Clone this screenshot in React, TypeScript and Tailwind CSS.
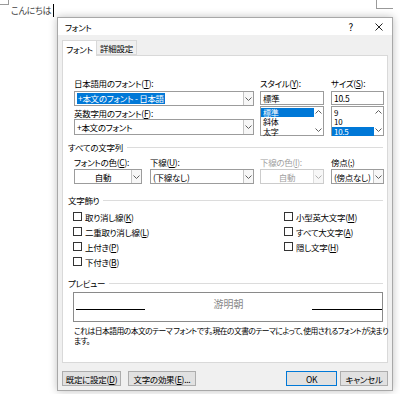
import React from 'react';

const jp = "font-['Noto_Sans_CJK_JP',sans-serif] [font-feature-settings:'palt']";

function Chevron({ up = false, color = '#606060' }: { up?: boolean; color?: string }) {
  return (
    <svg width="7" height="4" viewBox="0 0 7 4" className="block">
      <polyline
        points={up ? '0.5,3.5 3.5,0.5 6.5,3.5' : '0.5,0.5 3.5,3.5 6.5,0.5'}
        fill="none"
        stroke={color}
        strokeWidth="1"
      />
    </svg>
  );
}

// label with a mnemonic key underlined
function M({ a, k, b = '', className = '' }: { a: string; k: string; b?: string; className?: string }) {
  return (
    <span className={className}>
      {a}
      <span className="underline underline-offset-1">{k}</span>
      {b}
    </span>
  );
}

function Combo({ children, w, disabled = false, center = false, h = 'h-[15px]' }: { children: React.ReactNode; w: string; disabled?: boolean; center?: boolean; h?: string }) {
  return (
    <div className={`${w} ${h} flex bg-white border ${disabled ? 'border-[#cccccc] text-[#a0a0a0]' : 'border-[#9c9c9c]'}`}>
      <div className={`flex-1 flex items-center px-[2px] overflow-hidden ${center ? 'justify-center' : ''}`}>{children}</div>
      <div className={`w-[10px] flex items-center justify-center border-l ${disabled ? 'border-[#dddddd]' : 'border-[#c4c4c4]'} bg-[#f7f7f7]`}>
        <Chevron color={disabled ? '#b0b0b0' : '#606060'} />
      </div>
    </div>
  );
}

function ListBox({ items, sel, w }: { items: string[]; sel: number; w: string }) {
  return (
    <div className={`${w} h-[30px] mt-[1px] flex bg-white border border-[#9c9c9c]`}>
      <div className="flex-1 flex flex-col py-[0.5px] text-[8px]">
        {items.map((t, i) => (
          <div
            key={t}
            className={`h-[9.5px] leading-[9.5px] px-[2px] ${i === sel ? 'bg-[#0078d7] text-white' : ''}`}
          >
            {t}
          </div>
        ))}
      </div>
      <div className="w-[9px] flex flex-col items-center justify-between py-[3px]">
        <Chevron up />
        <Chevron />
      </div>
    </div>
  );
}

function Section({ title, className = '' }: { title: string; className?: string }) {
  return (
    <div className={`h-[12px] flex items-center gap-[4px] ${className}`}>
      <span>{title}</span>
      <div className="flex-1 h-px bg-[#dcdcdc]" />
    </div>
  );
}

function Check({ children }: { children: React.ReactNode }) {
  return (
    <div className="h-[15px] flex items-center gap-[3px]">
      <div className="w-[9px] h-[9px] border border-[#333333] bg-white" />
      <span>{children}</span>
    </div>
  );
}

function Button({ children, primary = false, w }: { children: React.ReactNode; primary?: boolean; w: string }) {
  return (
    <div
      className={`${w} h-[15px] flex items-center justify-center bg-[#e1e1e1] border ${primary ? 'border-[#0078d7]' : 'border-[#adadad]'}`}
    >
      {children}
    </div>
  );
}

export default function App() {
  return (
    <div className={`relative w-[400px] h-[394px] bg-white overflow-hidden text-[8.5px] leading-[12px] tracking-[-0.3px] whitespace-nowrap text-black ${jp}`}>
      {/* page corner marks */}
      <div className="absolute left-0 top-0 w-[9px] h-[5px] border-r border-b border-[#9a9a9a]" />
      <div className="absolute left-[376px] top-0 w-[17px] h-[9px] border-l border-b border-[#9a9a9a]" />

      {/* document text */}
      <div className="flex items-center pl-[11px] pt-[4px] h-[17px] text-[#444444] text-[9px]">
        <span>こんにちは</span>
        <div className="ml-[2px] w-px h-[13px] bg-black" />
      </div>

      {/* font dialog */}
      <div className="absolute left-[57px] top-[17px] w-[336px] h-[374px] flex flex-col bg-[#f0f0f0] border border-[#a8a8a8] shadow-[0_0_8px_rgba(0,0,0,0.25)]">
        <div className="h-[17px] bg-white flex items-center pl-[7px] pr-[9px]">
          <span>フォント</span>
          <span className="ml-auto mr-[22px] text-[10px]">?</span>
          <svg width="8" height="8" viewBox="0 0 8 8">
            <path d="M0.5 0.5 L7.5 7.5 M7.5 0.5 L0.5 7.5" stroke="#222" strokeWidth="1" />
          </svg>
        </div>

        <div className="flex-1 flex flex-col pl-[4px] pr-[4px]">
          {/* tabs */}
          <div className="mt-[5px] flex h-[15px]">
            <div className="w-[35px] bg-white border border-b-0 border-[#d9d9d9] flex items-center justify-center relative z-10 h-[16px]">
              フォント
            </div>
            <div className="w-[40px] bg-[#f0f0f0] border border-l-0 border-[#d9d9d9] flex items-center justify-center">
              詳細設定
            </div>
          </div>

          {/* tab panel */}
          <div className="h-[308px] bg-white border border-[#d9d9d9] pl-[5px] pr-[4px] flex flex-col">
            <div className="ml-[6px] pt-[21px] flex">
              <div className="w-[180px] flex flex-col">
                <div className="h-[12px] flex items-center"><M a="日本語用のフォント(" k="T" b="):" /></div>
                <div className="mt-[2px]">
                  <Combo w="w-[180px]">
                    <span className="bg-[#0078d7] text-white px-[1px] leading-[11px]">+本文のフォント - 日本語</span>
                  </Combo>
                </div>
                <div className="h-[12px] mt-[1px] flex items-center"><M a="英数字用のフォント(" k="F" b="):" /></div>
                <Combo w="w-[180px]" h="h-[16px]">
                  <span>+本文のフォント</span>
                </Combo>
              </div>

              <div className="w-[64px] ml-[6px] flex flex-col">
                <div className="h-[12px] flex items-center"><M a="スタイル(" k="Y" b="):" /></div>
                <div className="mt-[2px] h-[14px] border border-[#9c9c9c] bg-white flex items-center px-[2px]">標準</div>
                <ListBox w="w-[64px]" items={['標準', '斜体', '太字']} sel={0} />
              </div>

              <div className="w-[53px] ml-[7px] flex flex-col">
                <div className="h-[12px] flex items-center"><M a="サイズ(" k="S" b="):" /></div>
                <div className="mt-[2px] h-[14px] border border-[#9c9c9c] bg-white flex items-center px-[2px]">10.5</div>
                <ListBox w="w-[53px]" items={['9', '10', '10.5']} sel={2} />
              </div>
            </div>

            <Section title="すべての文字列" className="mt-[5px]" />

            <div className="ml-[6px] mt-[3px] flex">
              <div className="w-[68px] flex flex-col">
                <div className="h-[12px] flex items-center"><M a="フォントの色(" k="C" b="):" /></div>
                <div className="mt-[1px]"><Combo w="w-[68px]" center>自動</Combo></div>
              </div>
              <div className="w-[104px] ml-[8px] flex flex-col">
                <div className="h-[12px] flex items-center"><M a="下線(" k="U" b="):" /></div>
                <div className="mt-[1px]"><Combo w="w-[104px]">(下線なし)</Combo></div>
              </div>
              <div className="w-[64px] ml-[6px] flex flex-col">
                <div className="h-[12px] flex items-center text-[#a0a0a0]"><M a="下線の色(" k="I" b="):" /></div>
                <div className="mt-[1px]"><Combo w="w-[64px]" disabled center>自動</Combo></div>
              </div>
              <div className="w-[53px] ml-[7px] flex flex-col">
                <div className="h-[12px] flex items-center"><M a="傍点(" k=";" b=")" /></div>
                <div className="mt-[1px]"><Combo w="w-[53px]">(傍点なし)</Combo></div>
              </div>
            </div>

            <Section title="文字飾り" className="mt-[10px]" />

            <div className="ml-[5px] mt-[3px] flex">
              <div className="w-[211px] flex flex-col">
                <Check><M a="取り消し線(" k="K" b=")" /></Check>
                <Check><M a="二重取り消し線(" k="L" b=")" /></Check>
                <Check><M a="上付き(" k="P" b=")" /></Check>
                <Check><M a="下付き(" k="B" b=")" /></Check>
              </div>
              <div className="flex flex-col">
                <Check><M a="小型英大文字(" k="M" b=")" /></Check>
                <Check><M a="すべて大文字(" k="A" b=")" /></Check>
                <Check><M a="隠し文字(" k="H" b=")" /></Check>
              </div>
            </div>

            <Section title="プレビュー" className="mt-[8px]" />

            <div className="ml-[5px] mt-[3px] h-[30px] border border-[#8a8a8a] flex items-end pb-[11px]">
              <div className="ml-[2px] w-[69px] h-px bg-black" />
              <div className="flex-1 flex justify-center self-center mb-[-6px] text-[10px] tracking-normal text-[#888888] font-['Liberation_Serif','Noto_Sans_CJK_JP',serif]">
                游明朝
              </div>
              <div className="w-[70px] h-px bg-black" />
            </div>

            <div className="ml-[6px] mt-[4px] leading-[10px] text-[7.8px] tracking-[-0.55px]">
              <div>これは日本語用の本文のテーマ フォントです。現在の文書のテーマによって、使用されるフォントが決まり</div>
              <div>ます。</div>
            </div>
          </div>

          {/* buttons */}
          <div className="mt-[8px] flex items-center">
            <Button w="w-[59px]"><M a="既定に設定(" k="D" b=")" /></Button>
            <div className="ml-[7px]">
              <Button w="w-[68px]"><M a="文字の効果(" k="E" b=")..." /></Button>
            </div>
            <div className="ml-auto flex gap-[3px]">
              <Button w="w-[51px]" primary>OK</Button>
              <Button w="w-[48px]">キャンセル</Button>
            </div>
          </div>
        </div>
      </div>
    </div>
  );
}
